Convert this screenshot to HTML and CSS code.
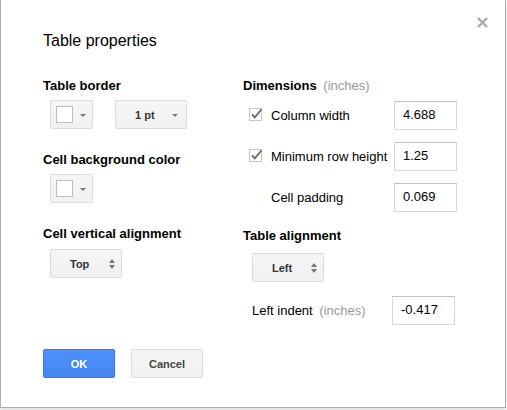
FILE: index.html
```html
<!DOCTYPE html>
<html>
<head>
<meta charset="utf-8">
<title>Table properties</title>
<link rel="stylesheet" href="styles.css">
</head>
<body>
<div class="dialog">
  <div class="close" title="Close">
    <svg width="11" height="11" viewBox="0 0 11 11"><path d="M1 1 L10 10 M10 1 L1 10" stroke="#a8a8a8" stroke-width="2.4" fill="none"/></svg>
  </div>
  <div class="title">Table properties</div>
  <div class="cols">
    <div class="col-left">
      <div class="label">Table border</div>
      <div class="btn-row first">
        <div class="btn swatch"><span class="box"></span><span class="caret"></span></div>
        <div class="btn menu pt"><span class="btn-text">1 pt</span><span class="caret"></span></div>
      </div>
      <div class="label gap">Cell background color</div>
      <div class="btn-row first">
        <div class="btn swatch"><span class="box"></span><span class="caret"></span></div>
      </div>
      <div class="label gap">Cell vertical alignment</div>
      <div class="btn-row second">
        <div class="btn menu"><span class="btn-text">Top</span><span class="updown"><span class="up"></span><span class="down"></span></span></div>
      </div>
    </div>
    <div class="col-right">
      <div class="label">Dimensions <span class="unit">(inches)</span></div>
      <div class="field-row r1">
        <span class="check"><svg width="16" height="16" viewBox="0 0 16 16"><rect x="0.5" y="2.5" width="12" height="12" fill="#fff" stroke="#c6c6c6"/><path d="M3 8.5 L5.8 11.3 L12.5 3.2" stroke="#6a6a6a" stroke-width="1.8" fill="none"/></svg></span>
        <span class="field-label">Column width</span>
        <span class="input">4.688</span>
      </div>
      <div class="field-row r2">
        <span class="check"><svg width="16" height="16" viewBox="0 0 16 16"><rect x="0.5" y="2.5" width="12" height="12" fill="#fff" stroke="#c6c6c6"/><path d="M3 8.5 L5.8 11.3 L12.5 3.2" stroke="#6a6a6a" stroke-width="1.8" fill="none"/></svg></span>
        <span class="field-label">Minimum row height</span>
        <span class="input">1.25</span>
      </div>
      <div class="field-row r2">
        <span class="check"></span>
        <span class="field-label">Cell padding</span>
        <span class="input">0.069</span>
      </div>
      <div class="label align">Table alignment</div>
      <div class="btn-row third">
        <div class="btn menu"><span class="btn-text">Left</span><span class="updown"><span class="up"></span><span class="down"></span></span></div>
      </div>
      <div class="field-row indent">
        <span class="field-label wide">Left indent <span class="unit">(inches)</span></span>
        <span class="input">-0.417</span>
      </div>
    </div>
  </div>
  <div class="footer">
    <div class="action ok">OK</div>
    <div class="action cancel">Cancel</div>
  </div>
</div>
</body>
</html>
```

FILE: styles.css
```css
html, body {
  margin: 0;
  padding: 0;
  background: #fff;
}
body {
  font-family: "Liberation Sans", Arial, sans-serif;
  font-size: 13px;
  color: #000;
  width: 507px;
  height: 410px;
  overflow: hidden;
}
.dialog {
  position: relative;
  box-sizing: border-box;
  width: 506px;
  height: 408px;
  border: 1px solid #acacac;
  border-top: none;
  background: #fff;
  padding: 31px 0 0 42px;
  box-shadow: 0 2px 4px rgba(0,0,0,0.15);
}
.close {
  position: absolute;
  top: 17px;
  left: 476px;
  width: 11px;
  height: 11px;
  line-height: 0;
}
.title {
  font-size: 16px;
  line-height: 20px;
  height: 20px;
}
.cols {
  display: flex;
  margin-top: 27px;
}
.col-left {
  width: 200px;
  flex-shrink: 0;
}
.col-right {
  flex: 1;
}
.label {
  font-weight: bold;
  font-size: 13px;
  line-height: 16px;
  height: 16px;
  white-space: nowrap;
}
.label.gap {
  margin-top: 23px;
}
.label.align {
  margin-top: 16px;
}
.unit {
  font-weight: normal;
  color: #999;
  margin-left: 3px;
}
.btn-row {
  display: flex;
  margin-left: 7px;
}
.btn-row.first { margin-top: 6px; }
.btn-row.second { margin-top: 7px; }
.btn-row.third { margin-top: 9px; margin-left: 9px; }
.btn {
  box-sizing: border-box;
  height: 29px;
  border: 1px solid #dcdcdc;
  border-radius: 2px;
  background: linear-gradient(#f5f5f5, #f1f1f1);
  display: flex;
  align-items: center;
  font-weight: bold;
  font-size: 11px;
  color: #444;
  flex-shrink: 0;
}
.swatch {
  width: 43px;
  padding-left: 5px;
}
.swatch .box {
  box-sizing: border-box;
  width: 17px;
  height: 17px;
  border: 1px solid #bdbdbd;
  background: #fff;
}
.swatch .caret {
  margin-left: 7px;
}
.caret {
  width: 0;
  height: 0;
  border-left: 3px solid transparent;
  border-right: 3px solid transparent;
  border-top: 3px solid #777;
  margin-top: 1px;
}
.menu {
  width: 72px;
  padding: 0 5px 0 19px;
}
.menu.pt {
  margin-left: 22px;
  padding-right: 8px;
}
.btn-text {
  flex: 1;
  color: #333;
}
.updown {
  display: flex;
  flex-direction: column;
  align-items: center;
  gap: 2px;
  margin-right: 1px;
}
.up, .down {
  width: 0;
  height: 0;
  border-left: 3.5px solid transparent;
  border-right: 3.5px solid transparent;
}
.up { border-bottom: 4px solid #777; }
.down { border-top: 4px solid #777; }
.field-row {
  display: flex;
  align-items: center;
  height: 29px;
}
.field-row.r1 { margin-top: 7px; }
.field-row.r2 { margin-top: 12px; }
.field-row.indent { margin-top: 14px; }
.check {
  flex: 0 0 22px;
  margin-left: 6px;
  height: 16px;
  line-height: 0;
  margin-top: -3px;
}
.field-label {
  flex: 0 0 123px;
  min-width: 0;
  white-space: nowrap;
}
.field-label.wide {
  flex: 0 0 149px;
  padding-left: 9px;
  box-sizing: border-box;
}
.input {
  box-sizing: border-box;
  flex: 0 0 63px;
  height: 29px;
  border: 1px solid #d9d9d9;
  border-top-color: #c0c0c0;
  padding: 0 8px;
  display: flex;
  align-items: center;
  padding-bottom: 2px;
}
.footer {
  display: flex;
  gap: 16px;
  margin-top: 24px;
}
.action {
  box-sizing: border-box;
  width: 72px;
  height: 29px;
  border-radius: 2px;
  display: flex;
  align-items: center;
  justify-content: center;
  font-weight: bold;
  font-size: 11px;
}
.ok {
  background: linear-gradient(#4d90fe, #4787ed);
  border: 1px solid #3079ed;
  color: #fff;
}
.cancel {
  background: linear-gradient(#f5f5f5, #f1f1f1);
  border: 1px solid #dcdcdc;
  color: #444;
}
```
